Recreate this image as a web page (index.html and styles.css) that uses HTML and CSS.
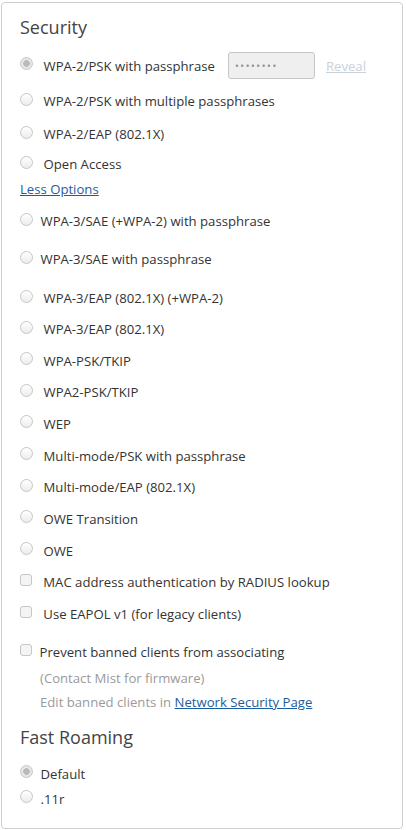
FILE: index.html
```html
<!DOCTYPE html>
<html lang="en">
<head>
<meta charset="utf-8">
<title>Security</title>
<link rel="stylesheet" href="styles.css">
</head>
<body>
<div class="card">
  <h2 class="title">Security</h2>

  <div class="opt opt-pass">
    <input class="radio" type="radio" name="sec" checked disabled>
    <span class="label">WPA-2/PSK with passphrase</span>
    <span class="pass">••••••••</span>
    <a class="reveal" href="#">Reveal</a>
  </div>
  <div class="opt m-12"><input class="radio" type="radio" name="sec"><span class="label">WPA-2/PSK with multiple passphrases</span></div>
  <div class="opt m-13"><input class="radio" type="radio" name="sec"><span class="label">WPA-2/EAP (802.1X)</span></div>
  <div class="opt m-10"><input class="radio" type="radio" name="sec"><span class="label">Open Access</span></div>
  <div class="opt m-5"><a class="link" href="#">Less Options</a></div>
  <div class="opt m-12 tight"><input class="radio" type="radio" name="sec"><span class="label">WPA-3/SAE (+WPA-2) with passphrase</span></div>
  <div class="opt m-18 tight"><input class="radio" type="radio" name="sec"><span class="label">WPA-3/SAE with passphrase</span></div>
  <div class="opt m-19"><input class="radio" type="radio" name="sec"><span class="label">WPA-3/EAP (802.1X) (+WPA-2)</span></div>
  <div class="opt m-11"><input class="radio" type="radio" name="sec"><span class="label">WPA-3/EAP (802.1X)</span></div>
  <div class="opt"><input class="radio" type="radio" name="sec"><span class="label">WPA-PSK/TKIP</span></div>
  <div class="opt"><input class="radio" type="radio" name="sec"><span class="label">WPA2-PSK/TKIP</span></div>
  <div class="opt"><input class="radio" type="radio" name="sec"><span class="label">WEP</span></div>
  <div class="opt"><input class="radio" type="radio" name="sec"><span class="label">Multi-mode/PSK with passphrase</span></div>
  <div class="opt"><input class="radio" type="radio" name="sec"><span class="label">Multi-mode/EAP (802.1X)</span></div>
  <div class="opt"><input class="radio" type="radio" name="sec"><span class="label">OWE Transition</span></div>
  <div class="opt"><input class="radio" type="radio" name="sec"><span class="label">OWE</span></div>
  <div class="opt"><input class="check" type="checkbox"><span class="label">MAC address authentication by RADIUS lookup</span></div>
  <div class="opt"><input class="check" type="checkbox"><span class="label">Use EAPOL v1 (for legacy clients)</span></div>
  <div class="opt m-18 tight"><input class="check" type="checkbox"><span class="label">Prevent banned clients from associating</span></div>
  <div class="opt m-6 note">(Contact Mist for firmware)</div>
  <div class="opt m-4 note">Edit banned clients in&nbsp;<a class="link" href="#">Network Security Page</a></div>

  <h2 class="title title-2">Fast Roaming</h2>
  <div class="opt m-15 tight"><input class="radio" type="radio" name="fr" checked disabled><span class="label">Default</span></div>
  <div class="opt m-5 tight"><input class="radio" type="radio" name="fr"><span class="label">.11r</span></div>
</div>
</body>
</html>
```

FILE: styles.css
```css
* {
  box-sizing: border-box;
}

body {
  margin: 0;
  background: #fff;
  font-family: "Open Sans", "Liberation Sans", sans-serif;
  color: #333;
}

.card {
  width: 402px;
  margin: 2px 3px 1px 1px;
  padding: 12px 18px 19px;
  border: 1px solid #cfcfcf;
  border-radius: 4px;
  background: #fff;
}

.title {
  margin: 0;
  font-size: 18px;
  line-height: 24px;
  font-weight: 400;
  color: #444;
}

.title-2 {
  margin-top: 13px;
}

.opt {
  display: flex;
  align-items: center;
  height: 20px;
  margin-top: 11.67px;
  font-size: 13.15px;
  line-height: 20px;
  white-space: nowrap;
}

.opt-pass {
  height: 27px;
  margin-top: 13px;
}

.m-4 { margin-top: 4px; }
.m-5 { margin-top: 5px; }
.m-6 { margin-top: 6px; }
.m-10 { margin-top: 10px; }
.m-11 { margin-top: 11px; }
.m-12 { margin-top: 12px; }
.m-13 { margin-top: 13px; }
.m-15 { margin-top: 15px; }
.m-18 { margin-top: 18px; }
.m-19 { margin-top: 19px; }

.radio,
.check {
  appearance: none;
  -webkit-appearance: none;
  flex: none;
  width: 13px;
  height: 13px;
  margin: 0 10.5px 4px 0;
  border: 1px solid #c6c6c6;
  background: linear-gradient(#ffffff, #ececec);
}

.radio {
  border-radius: 50%;
}

.radio:checked {
  background: radial-gradient(circle, #bababa 0 3px, #e6e6e6 3.6px);
  border-color: #c6c6c6;
}

.check {
  width: 12px;
  height: 12px;
  margin-right: 11.3px;
  border-radius: 3px;
  background: #f4f4f4;
}

.tight .radio,
.tight .check {
  margin-right: 7.5px;
}

.note {
  padding-left: 20px;
  color: #9a9a9a;
}

.pass {
  display: flex;
  align-items: center;
  width: 87px;
  height: 27px;
  margin-left: 13px;
  padding-left: 6px;
  border: 1px solid #c6c6c6;
  border-radius: 3px;
  background: #efefef;
  color: #8c8c8c;
  font-size: 10px;
  letter-spacing: 1.6px;
}

.reveal {
  margin-left: 11px;
  color: #c9d1d9;
  text-decoration: underline;
}

.link {
  color: #1d5c9c;
  text-decoration: underline;
}
```
